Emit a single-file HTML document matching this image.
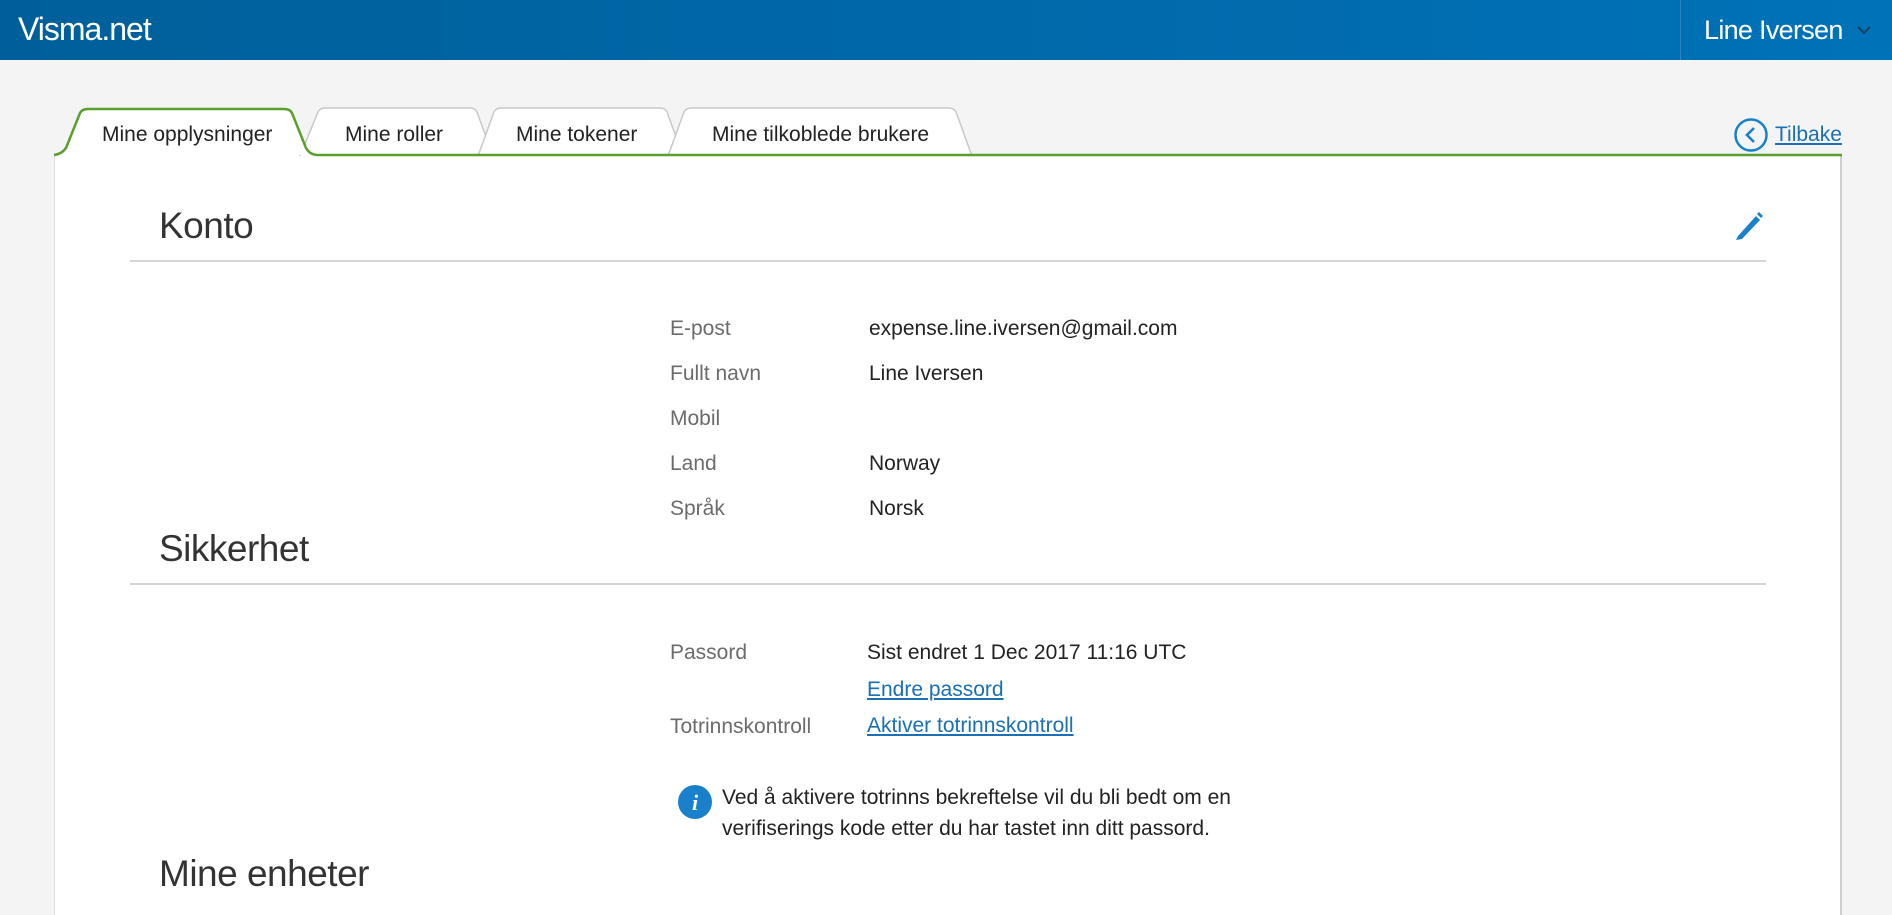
<!DOCTYPE html>
<html><head><meta charset="utf-8"><style>
*{margin:0;padding:0;box-sizing:border-box}
body{width:1892px;height:899px;overflow:hidden;background:#f4f4f4;font-family:"Liberation Sans",Arial,sans-serif;position:relative}
.hdr{position:absolute;left:0;top:0;width:1892px;height:60px;background:linear-gradient(90deg,#005f9a,#0072b8)}
.a{position:absolute;white-space:nowrap}
.lbl{color:#6b6b6b;font-size:21px}
.val{color:#222;font-size:21px}
a{color:#1a6fb5;text-decoration:underline}
h2{font-weight:300;font-size:37px;color:#333;position:absolute;font-family:"Liberation Sans",sans-serif;letter-spacing:-0.5px}
.line{position:absolute;left:130px;width:1636px;height:2px;background:#d6d6d6}
.tab{position:absolute;top:123px;font-size:21px;color:#222;white-space:nowrap}
</style></head><body>
<div class="hdr"></div>
<div class="a" style="left:18px;top:11px;color:#fff;font-size:32px;letter-spacing:-1px">Visma.net</div>
<div class="a" style="left:1680px;top:0;width:1px;height:60px;background:#2a86c4"></div>
<div class="a" style="left:1704px;top:15px;color:#fff;font-size:27px;letter-spacing:-0.7px">Line Iversen</div>
<svg class="a" style="left:1856px;top:24px" width="16" height="12"><path d="M2 3 L8 9 L14 3" stroke="#1d3b55" stroke-width="1.8" fill="none"/></svg>

<div class="a" style="left:54px;top:155px;width:1788px;height:760px;background:#fff;border-right:2px solid #cfcfcf;border-left:1px solid #ddd"></div>
<svg class="a" style="left:0;top:100px" width="1892" height="60">
<path d="M300 56 L318 12 Q320 8 325 8 L470 8 Q475 8 477 12 L493 56" fill="#fff" stroke="#c8c8c8" stroke-width="1.5"/>
<path d="M478 56 L494 12 Q496 8 501 8 L660 8 Q665 8 667 12 L683 56" fill="#fff" stroke="#c8c8c8" stroke-width="1.5"/>
<path d="M668 56 L684 12 Q686 8 691 8 L949 8 Q954 8 956 12 L972 56" fill="#fff" stroke="#c8c8c8" stroke-width="1.5"/>
<path d="M54 55 Q62 54 66 48 L80 13 Q82 9 88 9 L284 9 Q290 9 292 13 L306 48 Q310 55 318 55 L1842 55" fill="#fff" stroke="#5a9e2e" stroke-width="2.5"/>
</svg>
<div class="tab" style="left:102px">Mine opplysninger</div>
<div class="tab" style="left:345px">Mine roller</div>
<div class="tab" style="left:516px">Mine tokener</div>
<div class="tab" style="left:712px">Mine tilkoblede brukere</div>

<svg class="a" style="left:1733px;top:117px" width="36" height="36"><circle cx="18" cy="18" r="15.5" stroke="#1a80cc" stroke-width="2.5" fill="none"/><path d="M21 11 L14 18 L21 25" stroke="#1a80cc" stroke-width="2.6" fill="none"/></svg>
<a class="a" style="left:1775px;top:123px;font-size:21px;color:#1a6fb5">Tilbake</a>

<h2 style="left:159px;top:205px">Konto</h2>
<svg class="a" style="left:1733px;top:210px" width="30" height="32"><path d="M5 26 L23 6 L27 10 L9 29 L3 30 Z" fill="#1a80cc"/><path d="M24 4 L26 2 L30 6 L28 8 Z" fill="#1a80cc"/></svg>
<div class="line" style="top:260px"></div>

<div class="a lbl" style="left:670px;top:317px">E-post</div><div class="a val" style="left:869px;top:317px">expense.line.iversen@gmail.com</div>
<div class="a lbl" style="left:670px;top:362px">Fullt navn</div><div class="a val" style="left:869px;top:362px">Line Iversen</div>
<div class="a lbl" style="left:670px;top:407px">Mobil</div>
<div class="a lbl" style="left:670px;top:452px">Land</div><div class="a val" style="left:869px;top:452px">Norway</div>
<div class="a lbl" style="left:670px;top:497px">Språk</div><div class="a val" style="left:869px;top:497px">Norsk</div>

<h2 style="left:159px;top:528px">Sikkerhet</h2>
<div class="line" style="top:583px"></div>

<div class="a lbl" style="left:670px;top:641px">Passord</div><div class="a val" style="left:867px;top:641px">Sist endret 1 Dec 2017 11:16 UTC</div>
<a class="a val" style="left:867px;top:678px;color:#1a6fb5">Endre passord</a>
<div class="a lbl" style="left:670px;top:715px">Totrinnskontroll</div><a class="a val" style="left:867px;top:714px;color:#1a6fb5">Aktiver totrinnskontroll</a>

<svg class="a" style="left:677px;top:784px" width="36" height="36"><circle cx="18" cy="18" r="17" fill="#1a80cc"/><text x="18" y="26" text-anchor="middle" font-family="Liberation Serif,serif" font-style="italic" font-weight="bold" font-size="22" fill="#fff">i</text></svg>
<div class="a val" style="left:722px;top:782px;line-height:31px">Ved å aktivere totrinns bekreftelse vil du bli bedt om en<br>verifiserings kode etter du har tastet inn ditt passord.</div>

<h2 style="left:159px;top:853px">Mine enheter</h2>
</body></html>
